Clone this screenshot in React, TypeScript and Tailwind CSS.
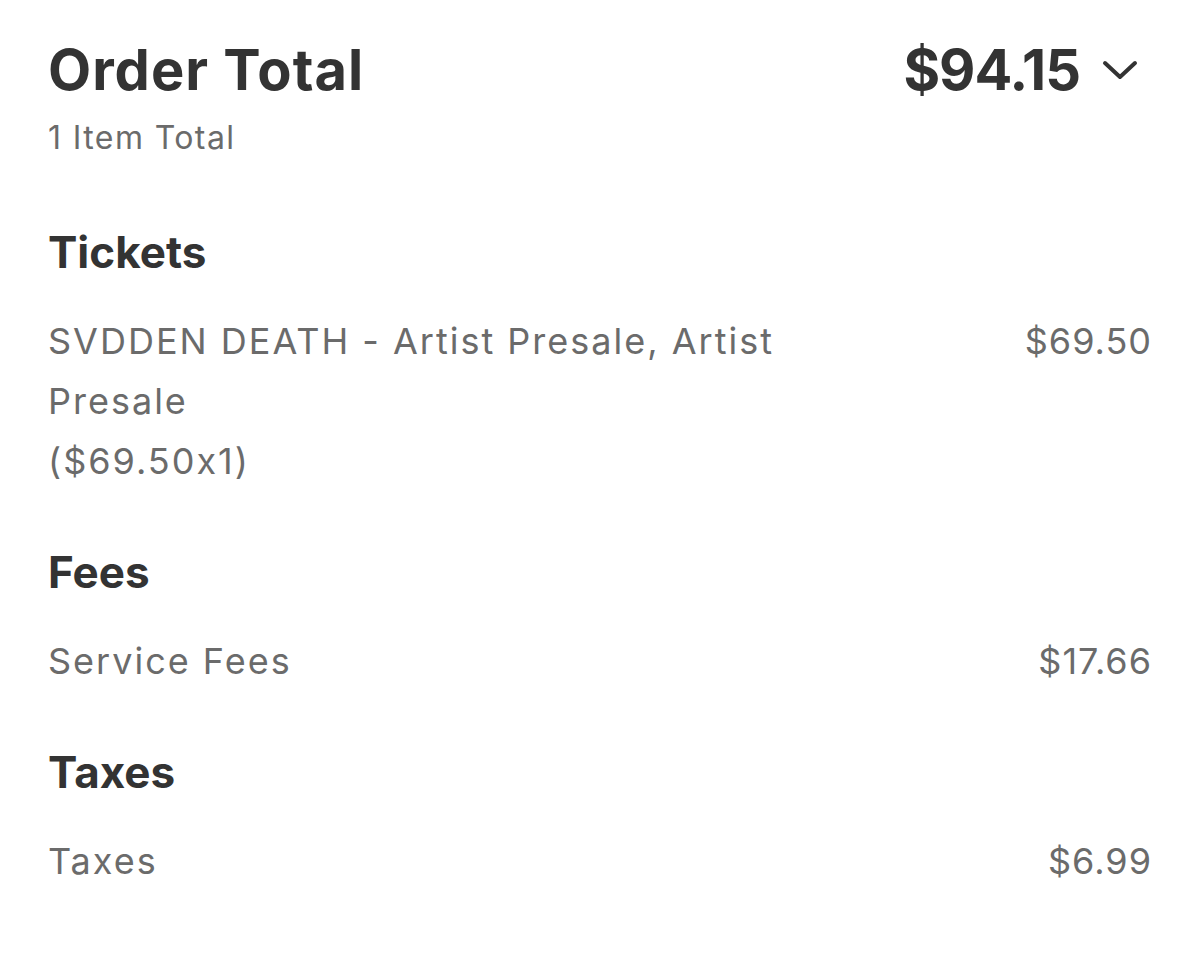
import React from 'react';

const rows = [
  {
    title: 'Tickets',
    items: [{ label: 'SVDDEN DEATH - Artist Presale, Artist Presale', sub: '($69.50x1)', price: '$69.50' }],
  },
  { title: 'Fees', items: [{ label: 'Service Fees', price: '$17.66' }] },
  { title: 'Taxes', items: [{ label: 'Taxes', price: '$6.99' }] },
];

export default function App() {
  return (
    <div className="min-h-[957px] w-[1200px] bg-white px-[48px] pt-[36px] font-['Inter',sans-serif] text-[#333333] [font-feature-settings:'calt'_0]">
      <div className="flex items-start justify-between">
        <div>
          <h1 className="text-[56px] font-bold leading-[68px] tracking-[1px]">Order Total</h1>
          <p className="mt-[14px] text-[32px] leading-[40px] tracking-[1.4px] text-[#6b6b6b]">1 Item Total</p>
        </div>
        <div className="flex items-center gap-[22px] pr-[14px]">
          <span className="text-[56px] font-bold leading-[68px] tracking-[-1px]">$94.15</span>
          <svg width="36" height="22" viewBox="0 0 36 22" fill="none" stroke="#333333" strokeWidth="4" strokeLinecap="round" strokeLinejoin="round">
            <path d="M3 4 L18 18 L33 4" />
          </svg>
        </div>
      </div>

      <div className="mt-[68px] flex flex-col gap-[55px]">
        {rows.map((r) => (
          <section key={r.title}>
            <h2 className="text-[44px] font-bold leading-[52px]">{r.title}</h2>
            {r.items.map((it) => (
              <div key={it.label} className="mt-[33px] flex justify-between gap-[200px] text-[36px] leading-[60px] tracking-[2px] text-[#6b6b6b]">
                <div className="max-w-[780px]">
                  <div>{it.label}</div>
                  {it.sub && <div>{it.sub}</div>}
                </div>
                <div className="shrink-0 tracking-[1px]">{it.price}</div>
              </div>
            ))}
          </section>
        ))}
      </div>
    </div>
  );
}
